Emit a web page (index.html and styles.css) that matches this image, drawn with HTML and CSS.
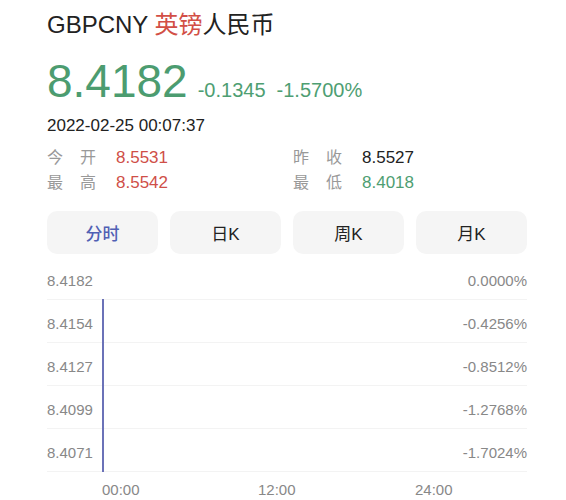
FILE: index.html
```html
<!DOCTYPE html>
<html lang="zh">
<head>
<meta charset="utf-8">
<link rel="stylesheet" href="styles.css">
</head>
<body>
<div class="page">
  <h1 class="title">GBPCNY <span class="red">英镑</span>人民币</h1>
  <div class="quote">
    <span class="price">8.4182</span>
    <span class="change">-0.1345</span>
    <span class="change">-1.5700%</span>
  </div>
  <div class="date">2022-02-25 00:07:37</div>
  <div class="stats">
    <div class="stat"><span class="label">今开</span><span class="val red">8.5531</span></div>
    <div class="stat"><span class="label">昨收</span><span class="val">8.5527</span></div>
    <div class="stat"><span class="label">最高</span><span class="val red">8.5542</span></div>
    <div class="stat"><span class="label">最低</span><span class="val green">8.4018</span></div>
  </div>
  <div class="tabs">
    <div class="tab active">分时</div>
    <div class="tab">日K</div>
    <div class="tab">周K</div>
    <div class="tab">月K</div>
  </div>
  <div class="chart">
    <div class="vline"></div>
    <div class="row first"><span>8.4182</span><span>0.0000%</span></div>
    <div class="row"><span>8.4154</span><span>-0.4256%</span></div>
    <div class="row"><span>8.4127</span><span>-0.8512%</span></div>
    <div class="row"><span>8.4099</span><span>-1.2768%</span></div>
    <div class="row"><span>8.4071</span><span>-1.7024%</span></div>
  </div>
  <div class="times">
    <span>00:00</span><span>12:00</span><span>24:00</span>
  </div>
</div>
</body>
</html>
```

FILE: styles.css
```css
* { box-sizing: border-box; }
html, body { margin: 0; padding: 0; background: #fff; }
body {
  font-family: "Liberation Sans", "Noto Sans CJK SC", Arial, sans-serif;
  color: #222;
}
.page {
  width: 566px;
  padding: 10px 39px 0 47px;
}
.title {
  margin: 0;
  font-size: 24px;
  line-height: 30px;
  font-weight: normal;
  color: #222;
}
.red { color: #d24f46; }
.green { color: #4e9e72; }
.quote {
  display: flex;
  align-items: baseline;
  margin-top: 16px;
  height: 50px;
}
.price {
  font-size: 46px;
  line-height: 50px;
  color: #4c9c70;
  margin-right: 10px;
}
.change {
  font-size: 20px;
  color: #4e9e72;
  margin-right: 11px;
}
.date {
  margin-top: 9px;
  font-size: 17px;
  line-height: 22px;
  color: #222;
}
.stats {
  margin-top: 8px;
  display: grid;
  grid-template-columns: 246px 1fr;
}
.stat {
  display: flex;
  align-items: baseline;
  height: 25px;
  line-height: 25px;
  font-size: 17px;
}
.label {
  color: #999;
  letter-spacing: 17px;
  width: 69px;
  font-size: 16px;
}
.val { color: #222; }
.val.red { color: #cf4f48; }
.val.green { color: #4e9e72; }
.tabs {
  margin-top: 16px;
  display: grid;
  grid-template-columns: repeat(4, 1fr);
  gap: 12px;
}
.tab {
  height: 43px;
  border-radius: 10px;
  background: #f5f5f5;
  display: flex;
  align-items: center;
  justify-content: center;
  font-size: 17px;
  color: #222;
}
.tab.active { color: #5160b4; font-weight: 500; }
.chart {
  position: relative;
  margin-top: 16px;
}
.row {
  display: flex;
  justify-content: space-between;
  font-size: 15px;
  line-height: 22px;
  color: #888;
  padding: 13px 0 7px;
  border-bottom: 1px solid #f3f3f3;
}
.row.first { padding-top: 0; padding-bottom: 7px; }
.vline {
  position: absolute;
  left: 55px;
  top: 29px;
  bottom: 0;
  width: 1.5px;
  background: #6b72b8;
}
.times {
  display: grid;
  grid-template-columns: 156px 157px auto;
  padding-left: 55px;
  margin-top: 7px;
  font-size: 15px;
  line-height: 22px;
  color: #888;
}
```
